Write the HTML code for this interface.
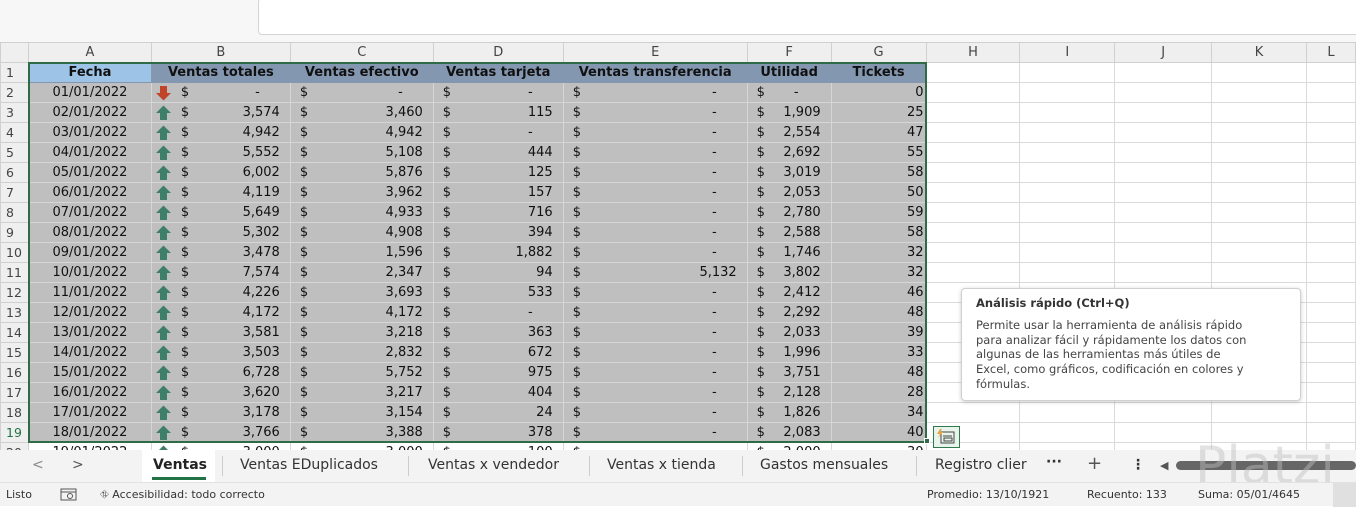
<!DOCTYPE html>
<html><head><meta charset="utf-8"><style>
*{margin:0;padding:0;box-sizing:border-box}
body{width:1356px;height:506px;overflow:hidden;background:#fff;font-family:"DejaVu Sans","Liberation Sans",sans-serif;position:relative;color:#111}
.fb{position:absolute;left:258px;top:-2px;width:1110px;height:37px;border:1px solid #d4d4d4;border-radius:4px;background:#fff}
.top{position:absolute;left:0;top:0;width:1356px;height:42px;background:#f7f7f7}
table{position:absolute;left:0;top:42px;border-collapse:collapse;table-layout:fixed;font-size:13px}
td{height:20px;border:1px solid #dadada;padding:0 4px 0 9px;white-space:nowrap;overflow:hidden;line-height:18px}
tr.h td{background:#efefef;color:#444;text-align:center;font-size:13px;border-color:#d0d0d0;padding:0}
td.r{background:#efefef;color:#444;font-size:12.5px;text-align:left;padding-left:5px;border-color:#d0d0d0}
tr.d td.c{background:#bfbfbf;border-color:#d6d6d6}
tr.hd td.c{background:#8497b0;font-weight:bold;text-align:center;color:#111;border-color:#8497b0;padding:0}
tr.hd td.a{background:#9dc3e6}
td.f{text-align:center;padding:0}
td.m{text-align:right;padding-right:10px}
td.m span{float:left}
td.m i{font-style:normal;padding-right:20px}
td.n{text-align:right;padding-right:2px}
td.b{padding-left:29px;position:relative}
td.b svg{position:absolute;left:3px;top:2px}
.sel{position:absolute;left:28px;top:62px;width:899px;height:381px;border:2px solid #2f6b47;pointer-events:none}
.hnd{position:absolute;left:924px;top:438px;width:6px;height:6px;background:#2f6b47;border:1px solid #fff}
.qa{position:absolute;left:933px;top:426px;width:27px;height:22px;border:1px solid #2f7a4d;background:#e8f3ec}
.tip{position:absolute;left:961px;top:288px;width:340px;height:113px;background:#fff;border:1px solid #d0d0d0;border-radius:4px;box-shadow:0 1px 4px rgba(0,0,0,.2);padding:7px 14px;font-size:11.5px;color:#444;line-height:14.8px;white-space:nowrap}
.tip b{display:block;color:#333;margin-bottom:7px}
.tabs{position:absolute;left:0;top:450px;width:1356px;height:32px;background:#f3f3f3;font-size:14px;color:#333}
.tabs span{position:absolute;top:7px}
.sep{position:absolute;top:6px;width:1px;height:20px;background:#ccc}
.act{position:absolute;left:142px;top:0;width:73px;height:32px;background:#fff}
.stat{position:absolute;left:0;top:482px;width:1356px;height:24px;background:#f3f3f3;font-size:11px;color:#333;border-top:1px solid #e2e2e2}
.stat span{position:absolute;top:5px}
</style></head><body>
<div class="top"></div><div class="fb"></div>
<table>
<colgroup><col style="width:28px"><col style="width:123px"><col style="width:139px"><col style="width:143px"><col style="width:130px"><col style="width:184px"><col style="width:84px"><col style="width:95px"><col style="width:94px"><col style="width:95px"><col style="width:97px"><col style="width:95px"><col style="width:49px"></colgroup>
<tr class="h"><td></td><td>A</td><td>B</td><td>C</td><td>D</td><td>E</td><td>F</td><td>G</td><td>H</td><td>I</td><td>J</td><td>K</td><td>L</td></tr>
<tr class="d hd"><td class="r">1</td><td class="c a">Fecha</td><td class="c">Ventas totales</td><td class="c">Ventas efectivo</td><td class="c">Ventas tarjeta</td><td class="c">Ventas transferencia</td><td class="c">Utilidad</td><td class="c">Tickets</td><td></td><td></td><td></td><td></td><td></td></tr>
<tr class="d"><td class="r">2</td><td class="c f">01/01/2022</td><td class="c m b"><svg width="17" height="16"><path d="M5 1h7v7h4l-7.5 7.5L1 8h4z" fill="#c0442a"/></svg><span>$</span><i>-</i></td><td class="c m"><span>$</span><i>-</i></td><td class="c m"><span>$</span><i>-</i></td><td class="c m"><span>$</span><i>-</i></td><td class="c m"><span>$</span><i style="padding-right:22px">-</i></td><td class="c n">0</td><td></td><td></td><td></td><td></td><td></td></tr>
<tr class="d"><td class="r">3</td><td class="c f">02/01/2022</td><td class="c m b"><svg width="17" height="16"><path d="M8.5 .5L16 8h-4v7H5V8H1z" fill="#3f7f6a"/></svg><span>$</span>3,574</td><td class="c m"><span>$</span>3,460</td><td class="c m"><span>$</span>115</td><td class="c m"><span>$</span><i>-</i></td><td class="c m"><span>$</span>1,909</td><td class="c n">25</td><td></td><td></td><td></td><td></td><td></td></tr>
<tr class="d"><td class="r">4</td><td class="c f">03/01/2022</td><td class="c m b"><svg width="17" height="16"><path d="M8.5 .5L16 8h-4v7H5V8H1z" fill="#3f7f6a"/></svg><span>$</span>4,942</td><td class="c m"><span>$</span>4,942</td><td class="c m"><span>$</span><i>-</i></td><td class="c m"><span>$</span><i>-</i></td><td class="c m"><span>$</span>2,554</td><td class="c n">47</td><td></td><td></td><td></td><td></td><td></td></tr>
<tr class="d"><td class="r">5</td><td class="c f">04/01/2022</td><td class="c m b"><svg width="17" height="16"><path d="M8.5 .5L16 8h-4v7H5V8H1z" fill="#3f7f6a"/></svg><span>$</span>5,552</td><td class="c m"><span>$</span>5,108</td><td class="c m"><span>$</span>444</td><td class="c m"><span>$</span><i>-</i></td><td class="c m"><span>$</span>2,692</td><td class="c n">55</td><td></td><td></td><td></td><td></td><td></td></tr>
<tr class="d"><td class="r">6</td><td class="c f">05/01/2022</td><td class="c m b"><svg width="17" height="16"><path d="M8.5 .5L16 8h-4v7H5V8H1z" fill="#3f7f6a"/></svg><span>$</span>6,002</td><td class="c m"><span>$</span>5,876</td><td class="c m"><span>$</span>125</td><td class="c m"><span>$</span><i>-</i></td><td class="c m"><span>$</span>3,019</td><td class="c n">58</td><td></td><td></td><td></td><td></td><td></td></tr>
<tr class="d"><td class="r">7</td><td class="c f">06/01/2022</td><td class="c m b"><svg width="17" height="16"><path d="M8.5 .5L16 8h-4v7H5V8H1z" fill="#3f7f6a"/></svg><span>$</span>4,119</td><td class="c m"><span>$</span>3,962</td><td class="c m"><span>$</span>157</td><td class="c m"><span>$</span><i>-</i></td><td class="c m"><span>$</span>2,053</td><td class="c n">50</td><td></td><td></td><td></td><td></td><td></td></tr>
<tr class="d"><td class="r">8</td><td class="c f">07/01/2022</td><td class="c m b"><svg width="17" height="16"><path d="M8.5 .5L16 8h-4v7H5V8H1z" fill="#3f7f6a"/></svg><span>$</span>5,649</td><td class="c m"><span>$</span>4,933</td><td class="c m"><span>$</span>716</td><td class="c m"><span>$</span><i>-</i></td><td class="c m"><span>$</span>2,780</td><td class="c n">59</td><td></td><td></td><td></td><td></td><td></td></tr>
<tr class="d"><td class="r">9</td><td class="c f">08/01/2022</td><td class="c m b"><svg width="17" height="16"><path d="M8.5 .5L16 8h-4v7H5V8H1z" fill="#3f7f6a"/></svg><span>$</span>5,302</td><td class="c m"><span>$</span>4,908</td><td class="c m"><span>$</span>394</td><td class="c m"><span>$</span><i>-</i></td><td class="c m"><span>$</span>2,588</td><td class="c n">58</td><td></td><td></td><td></td><td></td><td></td></tr>
<tr class="d"><td class="r">10</td><td class="c f">09/01/2022</td><td class="c m b"><svg width="17" height="16"><path d="M8.5 .5L16 8h-4v7H5V8H1z" fill="#3f7f6a"/></svg><span>$</span>3,478</td><td class="c m"><span>$</span>1,596</td><td class="c m"><span>$</span>1,882</td><td class="c m"><span>$</span><i>-</i></td><td class="c m"><span>$</span>1,746</td><td class="c n">32</td><td></td><td></td><td></td><td></td><td></td></tr>
<tr class="d"><td class="r">11</td><td class="c f">10/01/2022</td><td class="c m b"><svg width="17" height="16"><path d="M8.5 .5L16 8h-4v7H5V8H1z" fill="#3f7f6a"/></svg><span>$</span>7,574</td><td class="c m"><span>$</span>2,347</td><td class="c m"><span>$</span>94</td><td class="c m"><span>$</span>5,132</td><td class="c m"><span>$</span>3,802</td><td class="c n">32</td><td></td><td></td><td></td><td></td><td></td></tr>
<tr class="d"><td class="r">12</td><td class="c f">11/01/2022</td><td class="c m b"><svg width="17" height="16"><path d="M8.5 .5L16 8h-4v7H5V8H1z" fill="#3f7f6a"/></svg><span>$</span>4,226</td><td class="c m"><span>$</span>3,693</td><td class="c m"><span>$</span>533</td><td class="c m"><span>$</span><i>-</i></td><td class="c m"><span>$</span>2,412</td><td class="c n">46</td><td></td><td></td><td></td><td></td><td></td></tr>
<tr class="d"><td class="r">13</td><td class="c f">12/01/2022</td><td class="c m b"><svg width="17" height="16"><path d="M8.5 .5L16 8h-4v7H5V8H1z" fill="#3f7f6a"/></svg><span>$</span>4,172</td><td class="c m"><span>$</span>4,172</td><td class="c m"><span>$</span><i>-</i></td><td class="c m"><span>$</span><i>-</i></td><td class="c m"><span>$</span>2,292</td><td class="c n">48</td><td></td><td></td><td></td><td></td><td></td></tr>
<tr class="d"><td class="r">14</td><td class="c f">13/01/2022</td><td class="c m b"><svg width="17" height="16"><path d="M8.5 .5L16 8h-4v7H5V8H1z" fill="#3f7f6a"/></svg><span>$</span>3,581</td><td class="c m"><span>$</span>3,218</td><td class="c m"><span>$</span>363</td><td class="c m"><span>$</span><i>-</i></td><td class="c m"><span>$</span>2,033</td><td class="c n">39</td><td></td><td></td><td></td><td></td><td></td></tr>
<tr class="d"><td class="r">15</td><td class="c f">14/01/2022</td><td class="c m b"><svg width="17" height="16"><path d="M8.5 .5L16 8h-4v7H5V8H1z" fill="#3f7f6a"/></svg><span>$</span>3,503</td><td class="c m"><span>$</span>2,832</td><td class="c m"><span>$</span>672</td><td class="c m"><span>$</span><i>-</i></td><td class="c m"><span>$</span>1,996</td><td class="c n">33</td><td></td><td></td><td></td><td></td><td></td></tr>
<tr class="d"><td class="r">16</td><td class="c f">15/01/2022</td><td class="c m b"><svg width="17" height="16"><path d="M8.5 .5L16 8h-4v7H5V8H1z" fill="#3f7f6a"/></svg><span>$</span>6,728</td><td class="c m"><span>$</span>5,752</td><td class="c m"><span>$</span>975</td><td class="c m"><span>$</span><i>-</i></td><td class="c m"><span>$</span>3,751</td><td class="c n">48</td><td></td><td></td><td></td><td></td><td></td></tr>
<tr class="d"><td class="r">17</td><td class="c f">16/01/2022</td><td class="c m b"><svg width="17" height="16"><path d="M8.5 .5L16 8h-4v7H5V8H1z" fill="#3f7f6a"/></svg><span>$</span>3,620</td><td class="c m"><span>$</span>3,217</td><td class="c m"><span>$</span>404</td><td class="c m"><span>$</span><i>-</i></td><td class="c m"><span>$</span>2,128</td><td class="c n">28</td><td></td><td></td><td></td><td></td><td></td></tr>
<tr class="d"><td class="r">18</td><td class="c f">17/01/2022</td><td class="c m b"><svg width="17" height="16"><path d="M8.5 .5L16 8h-4v7H5V8H1z" fill="#3f7f6a"/></svg><span>$</span>3,178</td><td class="c m"><span>$</span>3,154</td><td class="c m"><span>$</span>24</td><td class="c m"><span>$</span><i>-</i></td><td class="c m"><span>$</span>1,826</td><td class="c n">34</td><td></td><td></td><td></td><td></td><td></td></tr>
<tr class="d"><td class="r" style="color:#217346">19</td><td class="c f">18/01/2022</td><td class="c m b"><svg width="17" height="16"><path d="M8.5 .5L16 8h-4v7H5V8H1z" fill="#3f7f6a"/></svg><span>$</span>3,766</td><td class="c m"><span>$</span>3,388</td><td class="c m"><span>$</span>378</td><td class="c m"><span>$</span><i>-</i></td><td class="c m"><span>$</span>2,083</td><td class="c n">40</td><td></td><td></td><td></td><td></td><td></td></tr>
<tr><td class="r">20</td><td class="f">19/01/2022</td><td class="m b"><svg width="17" height="16"><path d="M8.5 .5L16 8h-4v7H5V8H1z" fill="#3f7f6a"/></svg><span>$</span>3,000</td><td class="m"><span>$</span>3,000</td><td class="m"><span>$</span>100</td><td class="m"><span>$</span><i>-</i></td><td class="m"><span>$</span>2,000</td><td class="n">30</td><td></td><td></td><td></td><td></td><td></td></tr>
</table>
<div class="sel"></div><div class="hnd"></div>
<div class="qa"><svg width="25" height="20"><rect x="7" y="5" width="13" height="11" fill="none" stroke="#444"/><line x1="9" y1="9" x2="18" y2="9" stroke="#444"/><rect x="10" y="11" width="8" height="3" fill="none" stroke="#444"/><path d="M6 2l-3 5h3l-2 4 5-6H6l2-3z" fill="#e8a33a"/></svg></div>
<div class="tip"><b>Análisis rápido (Ctrl+Q)</b>Permite usar la herramienta de análisis rápido<br>para analizar fácil y rápidamente los datos con<br>algunas de las herramientas más útiles de<br>Excel, como gráficos, codificación en colores y<br>fórmulas.</div>
<div class="tabs">
<span style="left:32px;color:#888">&lt;</span><span style="left:72px;color:#555">&gt;</span>
<div class="act"></div>
<span style="left:153px;font-weight:bold;color:#222">Ventas</span>
<div style="position:absolute;left:152px;top:27px;width:54px;height:3px;background:#217346"></div>
<div class="sep" style="left:222px"></div>
<span style="left:240px">Ventas EDuplicados</span><div class="sep" style="left:408px"></div>
<span style="left:428px">Ventas x vendedor</span><div class="sep" style="left:589px"></div>
<span style="left:607px">Ventas x tienda</span><div class="sep" style="left:742px"></div>
<span style="left:760px">Gastos mensuales</span><div class="sep" style="left:916px"></div>
<span style="left:935px">Registro clier</span>
<span style="left:1046px;font-weight:bold;top:4px">···</span>
<span style="left:1087px;font-size:18px;top:3px;color:#555">+</span>
<span style="left:1131px;font-weight:bold">⋮</span>
<span style="left:1160px;font-size:11px;top:9px;color:#555">◀</span>
<div style="position:absolute;left:1176px;top:11px;width:180px;height:9px;border-radius:5px;background:#666"></div>
<span style="left:1195px;top:-14px;font-size:52px;color:rgba(190,190,190,.45)">Platzi</span>
</div>
<div class="stat">
<span style="left:6px">Listo</span>
<svg style="position:absolute;left:60px;top:5px" width="18" height="13"><rect x="1" y="1" width="15" height="11" fill="none" stroke="#555"/><line x1="1" y1="4" x2="16" y2="4" stroke="#555"/><circle cx="10" cy="8" r="2.5" fill="none" stroke="#555"/></svg>
<span style="left:100px">⛗ Accesibilidad: todo correcto</span>
<span style="left:927px">Promedio: 13/10/1921</span>
<span style="left:1087px">Recuento: 133</span>
<span style="left:1198px">Suma: 05/01/4645</span>
<div style="position:absolute;left:1333px;top:0;width:23px;height:24px;background:#e0e0e0"></div>
</div>
</body></html>
